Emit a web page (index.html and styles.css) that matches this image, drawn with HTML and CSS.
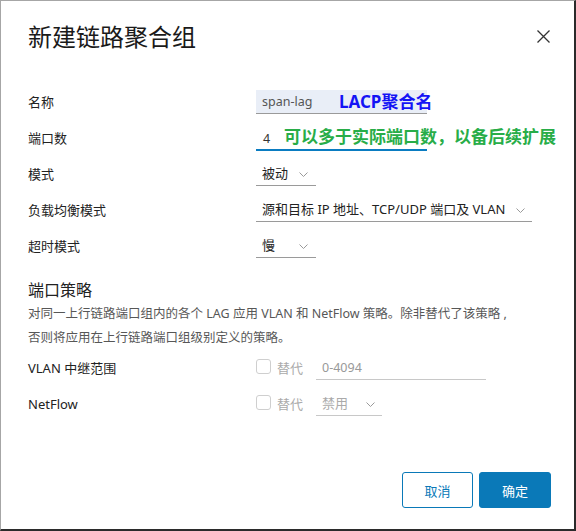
FILE: index.html
```html
<!DOCTYPE html>
<html lang="zh-CN">
<head>
<meta charset="utf-8">
<link rel="stylesheet" href="styles.css">
</head>
<body>
<div class="dialog">
  <div class="header">
    <h1 class="title">新建链路聚合组</h1>
    <svg class="close" width="13" height="13" viewBox="0 0 13 13"><path d="M0.5 0.5 L12.5 12.5 M12.5 0.5 L0.5 12.5" stroke="#333" stroke-width="1.3" fill="none"/></svg>
  </div>

  <div class="form">
    <div class="row">
      <div class="label">名称</div>
      <div class="ctrl">
        <div class="input filled">span-lag</div>
        <span class="note note-blue">LACP聚合名</span>
      </div>
    </div>
    <div class="row">
      <div class="label">端口数</div>
      <div class="ctrl">
        <div class="input focused">4</div>
        <span class="note note-green">可以多于实际端口数，以备后续扩展</span>
      </div>
    </div>
    <div class="row">
      <div class="label">模式</div>
      <div class="ctrl">
        <div class="select w60"><span>被动</span><svg class="chev" width="9" height="5" viewBox="0 0 9 5"><path d="M0.5 0.5 L4.5 4.5 L8.5 0.5" stroke="#9a9a9a" fill="none"/></svg></div>
      </div>
    </div>
    <div class="row">
      <div class="label">负载均衡模式</div>
      <div class="ctrl">
        <div class="select w276"><span>源和目标 IP 地址、TCP/UDP 端口及 VLAN</span><svg class="chev" width="9" height="5" viewBox="0 0 9 5"><path d="M0.5 0.5 L4.5 4.5 L8.5 0.5" stroke="#9a9a9a" fill="none"/></svg></div>
      </div>
    </div>
    <div class="row">
      <div class="label">超时模式</div>
      <div class="ctrl">
        <div class="select w60"><span>慢</span><svg class="chev" width="9" height="5" viewBox="0 0 9 5"><path d="M0.5 0.5 L4.5 4.5 L8.5 0.5" stroke="#9a9a9a" fill="none"/></svg></div>
      </div>
    </div>
  </div>

  <h2 class="section-title">端口策略</h2>
  <p class="desc">对同一上行链路端口组内的各个 LAG 应用 VLAN 和 NetFlow 策略。除非替代了该策略 ,<br>否则将应用在上行链路端口组级别定义的策略。</p>

  <div class="form">
    <div class="row">
      <div class="label">VLAN 中继范围</div>
      <div class="ctrl policy">
        <span class="checkbox"></span>
        <span class="override">替代</span>
        <div class="input disabled w170">0-4094</div>
      </div>
    </div>
    <div class="row">
      <div class="label">NetFlow</div>
      <div class="ctrl policy">
        <span class="checkbox"></span>
        <span class="override">替代</span>
        <div class="select disabled w66"><span>禁用</span><svg class="chev" width="9" height="5" viewBox="0 0 9 5"><path d="M0.5 0.5 L4.5 4.5 L8.5 0.5" stroke="#9a9a9a" fill="none"/></svg></div>
      </div>
    </div>
  </div>

  <div class="footer">
    <button class="btn btn-outline">取消</button>
    <button class="btn btn-primary">确定</button>
  </div>
</div>
</body>
</html>
```
FILE: styles.css
```css
* { box-sizing: border-box; }
html, body { margin: 0; padding: 0; }
body {
  width: 576px;
  height: 531px;
  background: #fff;
  border-top: 1px solid #a6a6a6;
  border-left: 1px solid #a6a6a6;
  border-right: 2px solid #2b2b2b;
  border-bottom: 2px solid #2b2b2b;
  font-family: "Noto Sans", "Noto Sans CJK SC", sans-serif;
  color: #222;
  overflow: hidden;
}
.dialog {
  display: flex;
  flex-direction: column;
  height: 100%;
  padding: 19px 23px 21px 27px;
}
.header {
  display: flex;
  align-items: center;
  justify-content: space-between;
  height: 32px;
}
.title {
  margin: 0;
  font-size: 24px;
  font-weight: 400;
  line-height: 32px;
  color: #1a1a1a;
  font-family: "Noto Sans CJK SC", sans-serif;
}
.close { margin-right: 1px; margin-top: 1px; }

.form { display: flex; flex-direction: column; }
.header + .form { margin-top: 32px; }
.row {
  display: grid;
  grid-template-columns: 228px 1fr;
  align-items: center;
  height: 36px;
}
.label {
  font-size: 13px;
  line-height: 18px;
  color: #222;
}
.ctrl {
  position: relative;
  display: flex;
  align-items: center;
}
.input {
  height: 24px;
  width: 171px;
  padding-left: 7px;
  font-size: 12.5px;
  line-height: 23px;
  color: #333;
  border-bottom: 1px solid #9a9a9a;
}
.input.filled {
  background: #e9eef7;
  color: #555;
  padding-left: 6px;
}
.input.focused {
  border-bottom: 2px solid #0a7cc1;
  margin-top: 1px;
}
.input.disabled {
  color: #999;
  border-bottom-color: #c8c8c8;
  padding-left: 6px;
}
.w170 { width: 170px; }

.select {
  display: flex;
  align-items: center;
  justify-content: space-between;
  height: 24px;
  padding: 0 8px 0 6px;
  font-size: 13px;
  line-height: 23px;
  color: #222;
  border-bottom: 1px solid #9a9a9a;
}
.select .chev { margin-top: 1px; }
.select.disabled {
  color: #aaa;
  border-bottom-color: #c8c8c8;
  padding-right: 7px;
}
.w60 { width: 60px; }
.w66 { width: 66px; }
.w276 { width: 276px; padding-right: 7px; }

.note {
  position: absolute;
  top: 50%;
  transform: translateY(-50%);
  font-size: 17px;
  font-weight: 700;
  line-height: 1;
  white-space: nowrap;
  font-family: "Noto Sans", "Noto Sans CJK SC", sans-serif;
}
.note-blue { left: 83px; color: #1414f5; margin-top: -1px; }
.note-green { left: 28px; color: #28ad48; margin-top: -2px; }

.section-title {
  margin: 15px 0 0;
  font-size: 16px;
  font-weight: 400;
  line-height: 22px;
  color: #222;
}
.desc {
  margin: 1px 0 0;
  font-size: 12.5px;
  line-height: 24px;
  color: #575757;
}

.policy { gap: 0; }
.checkbox {
  width: 15px;
  height: 15px;
  border: 1px solid #cfcfcf;
  border-radius: 3px;
  margin-top: -4px;
  background: #fff;
}
.override {
  margin-left: 6px;
  width: 39px;
  font-size: 13px;
  color: #aaa;
  line-height: 18px;
}

.footer {
  margin-top: auto;
  display: flex;
  justify-content: flex-end;
  gap: 6px;
}
.btn {
  height: 36px;
  border-radius: 3px;
  font-family: "Noto Sans CJK SC", sans-serif;
  font-size: 13px;
  padding: 0;
  cursor: pointer;
}
.btn-outline {
  width: 71px;
  background: #fff;
  color: #0a79b8;
  border: 1px solid #0a79b8;
}
.btn-primary {
  width: 72px;
  background: #0a79b8;
  color: #fff;
  border: 1px solid #0a79b8;
}
```
